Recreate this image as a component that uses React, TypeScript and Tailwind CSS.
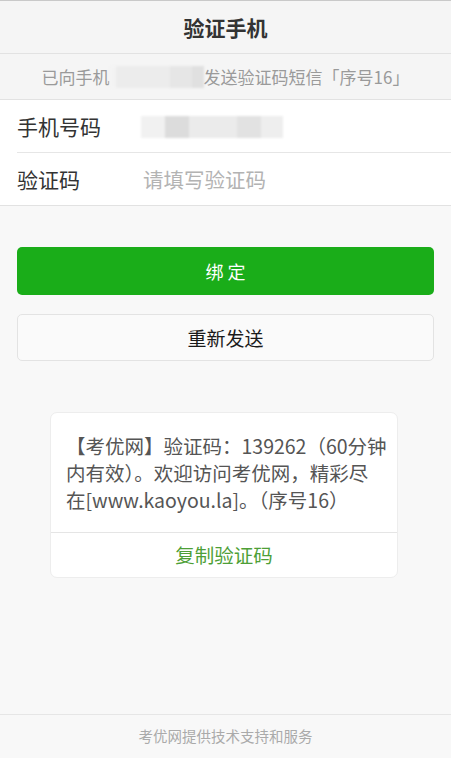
import React from "react";

function BlurBox({ blocks }: { blocks: { w: number; c: string }[] }) {
  return (
    <div className="flex h-[22px] blur-[1px]">
      {blocks.map((b, i) => (
        <div key={i} style={{ width: b.w, backgroundColor: b.c }} className="h-full" />
      ))}
    </div>
  );
}

export default function App() {
  return (
    <div
      className="flex h-[758px] w-full flex-col bg-[#f8f8f8] text-[#333]"
      style={{ fontFamily: '"Noto Sans CJK SC", "Noto Sans", sans-serif' }}
    >
      <div className="flex h-[54px] items-center justify-center border-t border-b border-t-[#c9c9c9] border-b-[#e2e2e2] bg-[#f5f5f5]">
        <span className="text-[21px] font-bold leading-none text-[#333]">验证手机</span>
      </div>
      <div className="flex h-[46px] items-center justify-center border-b border-[#e2e2e2] bg-[#f5f5f5] text-[17px] leading-none text-[#9a9a9a]">
        <span>已向手机</span>
        <BlurBox
          blocks={[
            { w: 6, c: "#f3f3f3" },
            { w: 54, c: "#ececec" },
            { w: 22, c: "#e6e6e6" },
            { w: 12, c: "#e0e0e0" },
          ]}
        />
        <span>发送验证码短信「序号16」</span>
      </div>
      <div className="border-b border-[#e2e2e2] bg-white">
        <div className="ml-[17px] flex h-[53px] items-center border-b border-[#e6e6e6]">
          <span className="w-[124px] text-[21px] leading-none text-[#333]">手机号码</span>
          <div className="pt-[1px]">
            <BlurBox
              blocks={[
                { w: 24, c: "#f1f1f1" },
                { w: 24, c: "#dcdcdc" },
                { w: 48, c: "#ebebeb" },
                { w: 24, c: "#e2e2e2" },
                { w: 22, c: "#eeeeee" },
              ]}
            />
          </div>
        </div>
        <div className="ml-[17px] flex h-[52px] items-center">
          <span className="w-[126px] text-[21px] leading-none text-[#333]">验证码</span>
          <span className="text-[20.5px] leading-none text-[#b3b3b3]">请填写验证码</span>
        </div>
      </div>

      <div className="mt-[41px] px-[17px]">
        <div className="flex h-[48px] items-center justify-center rounded-[5px] bg-[#1aad19] text-[18px] leading-none text-white">
          绑 定
        </div>
        <div className="mt-[19px] flex h-[47px] items-center justify-center rounded-[5px] border border-[#e3e3e3] bg-[#fafafa] text-[19px] leading-none text-[#1a1a1a]">
          重新发送
        </div>
      </div>

      <div className="ml-[50px] mt-[51px] w-[348px] rounded-[7px] border border-[#ededed] bg-white">
        <div className="pl-[15px] pt-[19px] pb-[19px] text-[19.5px] leading-[27px] whitespace-nowrap text-[#555]">
          【考优网】验证码：139262（60分钟
          <br />
          内有效）。欢迎访问考优网，精彩尽
          <br />
          在[www.kaoyou.la]。（序号16）
        </div>
        <div className="flex h-[45px] items-center justify-center border-t border-[#e5e5e5] text-[19.5px] leading-none text-[#4e9f37]">
          复制验证码
        </div>
      </div>

      <div className="mt-auto flex h-[44px] items-center justify-center border-t border-[#e6e6e6] text-[14.5px] leading-none text-[#aaaaaa]">
        考优网提供技术支持和服务
      </div>
    </div>
  );
}
